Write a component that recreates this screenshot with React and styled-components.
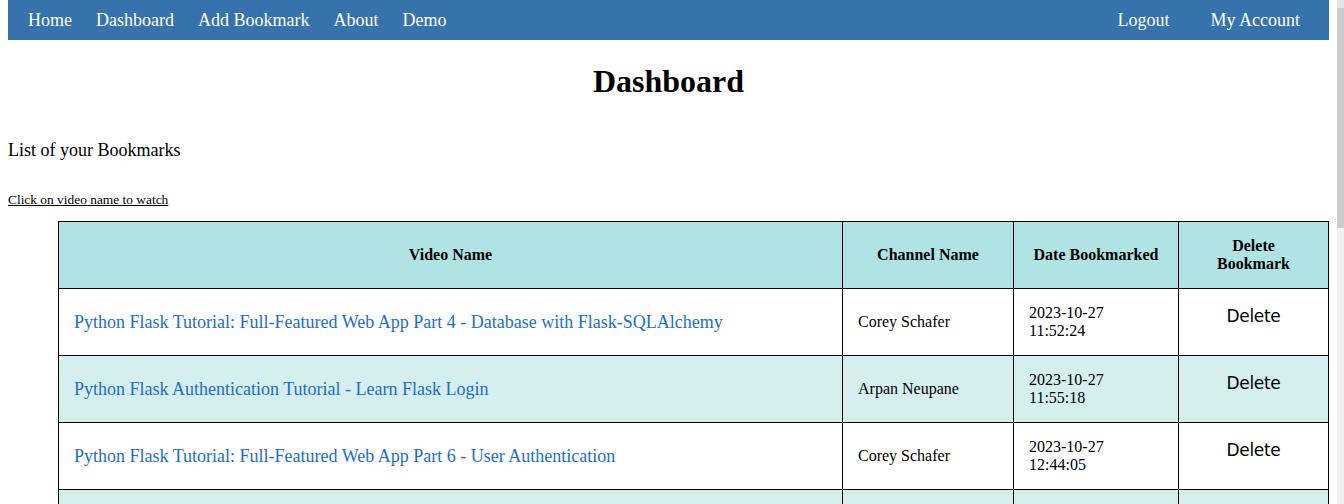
import React from "react";
import styled, { createGlobalStyle } from "styled-components";

const GlobalStyle = createGlobalStyle`
  html, body {
    margin: 0;
    padding: 0;
    height: 100%;
    overflow: hidden;
    background: #fff;
  }
  body {
    font-family: "Liberation Serif", "Times New Roman", serif;
    color: #000;
  }
`;

const bookmarks = [
  {
    title: "Python Flask Tutorial: Full-Featured Web App Part 4 - Database with Flask-SQLAlchemy",
    channel: "Corey Schafer",
    date: "2023-10-27",
    time: "11:52:24",
  },
  {
    title: "Python Flask Authentication Tutorial - Learn Flask Login",
    channel: "Arpan Neupane",
    date: "2023-10-27",
    time: "11:55:18",
  },
  {
    title: "Python Flask Tutorial: Full-Featured Web App Part 6 - User Authentication",
    channel: "Corey Schafer",
    date: "2023-10-27",
    time: "12:44:05",
  },
  {
    title: "Flask Tutorial #1 - How to Make Websites with Python",
    channel: "Tech With Tim",
    date: "2023-10-27",
    time: "12:50:11",
  },
];

export default function App() {
  return (
    <>
      <GlobalStyle />
      <Window>
        <Page>
          <Nav>
            <NavGroup>
              <NavLink href="#">Home</NavLink>
              <NavLink href="#">Dashboard</NavLink>
              <NavLink href="#">Add Bookmark</NavLink>
              <NavLink href="#">About</NavLink>
              <NavLink href="#">Demo</NavLink>
            </NavGroup>
            <NavGroup right>
              <NavLink href="#">Logout</NavLink>
              <NavLink href="#">My Account</NavLink>
            </NavGroup>
          </Nav>

          <Title>Dashboard</Title>
          <Subtitle>List of your Bookmarks</Subtitle>
          <Hint>Click on video name to watch</Hint>

          <Table>
            <colgroup>
              <col style={{ width: 784 }} />
              <col style={{ width: 171 }} />
              <col style={{ width: 165 }} />
              <col style={{ width: 150 }} />
            </colgroup>
            <thead>
              <tr>
                <Th>Video Name</Th>
                <Th>Channel Name</Th>
                <Th>Date Bookmarked</Th>
                <Th>Delete Bookmark</Th>
              </tr>
            </thead>
            <tbody>
              {bookmarks.map((b, i) => (
                <Row key={i} striped={i % 2 === 1}>
                  <Td>
                    <VideoLink href="#">{b.title}</VideoLink>
                  </Td>
                  <Td>{b.channel}</Td>
                  <Td>
                    {b.date}
                    <br />
                    {b.time}
                  </Td>
                  <ActionCell>
                    <DeleteButton type="button">Delete</DeleteButton>
                  </ActionCell>
                </Row>
              ))}
            </tbody>
          </Table>
        </Page>
        <ScrollBar>
          <ScrollArrow />
          <ScrollThumb />
        </ScrollBar>
      </Window>
    </>
  );
}

const Window = styled.div`
  display: flex;
  height: 100vh;
  overflow: hidden;
`;

const Page = styled.div`
  flex: 1;
  min-width: 0;
  padding: 0 8px;
`;

const Nav = styled.nav`
  display: flex;
  justify-content: space-between;
  align-items: center;
  height: 40px;
  padding: 0 8px;
  background: #3672ac;
`;

const NavGroup = styled.div`
  display: flex;
  align-items: center;
  gap: ${(props) => (props.right ? "17px" : "0")};
  margin-right: ${(props) => (props.right ? "9px" : "0")};
`;

const NavLink = styled.a`
  padding: 0 12px;
  color: #fff;
  font-size: 18px;
  text-decoration: none;
`;

const Title = styled.h1`
  margin: 23px 0 0;
  font-size: 32px;
  font-weight: bold;
  text-align: center;
  line-height: 37px;
`;

const Subtitle = styled.p`
  margin: 40px 0 0;
  font-size: 18px;
  line-height: 21px;
`;

const Hint = styled.p`
  margin: 31px 0 14px;
  font-size: 13.4px;
  line-height: 15px;
  text-decoration: underline;
`;

const Table = styled.table`
  width: calc(100% - 50px);
  margin-left: 50px;
  border-collapse: collapse;
  table-layout: fixed;
`;

const Th = styled.th`
  padding: 15px;
  background: #b0e4e4;
  border: 1px solid #000;
  font-size: 16px;
  line-height: 18px;
  font-weight: bold;
  text-align: center;
  vertical-align: middle;
`;

const Row = styled.tr`
  background: ${(props) => (props.striped ? "#d5eeee" : "#fff")};
`;

const Td = styled.td`
  padding: 15px;
  border: 1px solid #000;
  font-size: 16px;
  line-height: 18px;
  vertical-align: middle;
`;

const ActionCell = styled(Td)`
  text-align: center;
  vertical-align: top;
`;

const VideoLink = styled.a`
  color: #1b6fcd;
  font-size: 18px;
  line-height: 21px;
  text-decoration: none;
`;

const DeleteButton = styled.button`
  padding: 0 6px;
  border: none;
  background: transparent;
  color: #000;
  font-family: "DejaVu Sans", "Noto Sans", sans-serif;
  font-size: 17px;
  line-height: 24px;
  letter-spacing: -0.3px;
  cursor: pointer;
`;

const ScrollBar = styled.div`
  display: flex;
  flex-direction: column;
  width: 7px;
  background: #f1f1f1;
`;

const ScrollArrow = styled.div`
  height: 8px;
  background: #e6e6e6;
`;

const ScrollThumb = styled.div`
  height: 220px;
  background: #cdcdcd;
`;
